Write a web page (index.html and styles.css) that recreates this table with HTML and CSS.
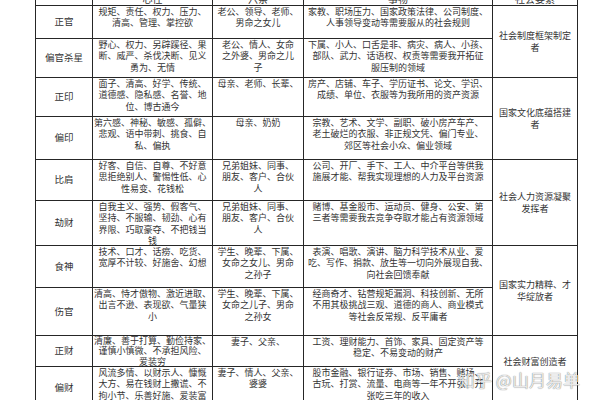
FILE: index.html
```html
<!DOCTYPE html>
<html lang="zh">
<head>
<meta charset="utf-8">
<link rel="stylesheet" href="styles.css">
</head>
<body>
<div class="page">
  <div class="grid">
    <div class="cell head"></div>
    <div class="cell head">心性</div>
    <div class="cell head">六亲</div>
    <div class="cell head">事物</div>
    <div class="cell head">社会要素</div>

    <div class="cell name">正官</div>
    <div class="cell txt">规矩、责任、权力、压力、<br>清高、管理、掌控欲</div>
    <div class="cell txt">老公、领导、老师、<br>男命之女儿</div>
    <div class="cell txt">家教、职场压力、国家政策法律、公司制度、<br>人事领导变动等需要服从的社会规则</div>
    <div class="cell soc">社会制度框架制定<br>者</div>

    <div class="cell name">偏官杀星</div>
    <div class="cell txt">野心、权力、另辟蹊径、果<br>断、威严、杀伐决断、见义<br>勇为、无情</div>
    <div class="cell txt">老公、情人、女命<br>之外婆、男命之儿<br>子</div>
    <div class="cell txt">下属、小人、口舌是非、病灾、病人、小孩、<br>部队、武力、话语权、权责等需要我开拓征<br>服压制的领域</div>

    <div class="cell name">正印</div>
    <div class="cell txt">面子、清高、好学、传统、<br>道德感、隐私感、名誉、地<br>位、博古通今</div>
    <div class="cell txt">母亲、老师、长辈、</div>
    <div class="cell txt">房产、店铺、车子、学历证书、论文、学识、<br>成绩、单位、衣服等为我所用的资产资源</div>
    <div class="cell soc">国家文化底蕴搭建<br>者</div>

    <div class="cell name">偏印</div>
    <div class="cell txt">第六感、神秘、敏感、孤僻、<br>悲观、语中带刺、挑食、自<br>私、偏执</div>
    <div class="cell txt">母亲、奶奶</div>
    <div class="cell txt">宗教、艺术、文学、副职、破小房产车产、<br>老土破烂的衣服、非正规文凭、偏门专业、<br>郊区等社会小众、偏业领域</div>

    <div class="cell name">比肩</div>
    <div class="cell txt">好客、自信、自尊、不好意<br>思拒绝别人、警惕性低、心<br>性易变、花钱松</div>
    <div class="cell txt">兄弟姐妹、同事、<br>朋友、客户、合伙<br>人</div>
    <div class="cell txt">公司、开厂、手下、工人、中介平台等供我<br>施展才能、帮我实现理想的人力及平台资源</div>
    <div class="cell soc">社会人力资源凝聚<br>发挥者</div>

    <div class="cell name">劫财</div>
    <div class="cell txt">自我主义、强势、假客气、<br>坚持、不服输、韧劲、心有<br>界限、巧取豪夺、不把钱当<br>钱</div>
    <div class="cell txt">兄弟姐妹、同事、<br>朋友、客户、合伙<br>人</div>
    <div class="cell txt">赌博、基金股市、运动员、健身、公安、第<br>三者等需要我去竞争夺取才能占有资源领域</div>

    <div class="cell name">食神</div>
    <div class="cell txt">技术、口才、话痨、吃货、<br>宽厚不计较、好施舍、幻想</div>
    <div class="cell txt">学生、晚辈、下属、<br>女命之女儿、男命<br>之孙子</div>
    <div class="cell txt">表演、唱歌、演讲、脑力科学技术从业、爱<br>吃、写作、捐款、放生等一切向外展现自我、<br>向社会回馈奉献</div>
    <div class="cell soc">国家实力精粹、才<br>华绽放者</div>

    <div class="cell name">伤官</div>
    <div class="cell txt">清高、恃才傲物、激近进取、<br>出言不逊、表现欲、气量狭<br>小</div>
    <div class="cell txt">学生、晚辈、下属、<br>女命之儿子、男命<br>之孙女</div>
    <div class="cell txt">经商奇才、钻营规矩漏洞、科技创新、无所<br>不用其极挑战三观、道德的商人、商业模式<br>等社会反常规、反平庸者</div>

    <div class="cell name">正财</div>
    <div class="cell txt tight">清廉、善于打算、勤俭持家、<br>谨慎小慎微、不承担风险、<br>爱装穷</div>
    <div class="cell txt">妻子、父亲、</div>
    <div class="cell txt">工资、理财能力、首饰、家具、固定资产等<br>稳定、不易变动的财产</div>
    <div class="cell soc upper">社会财富创造者</div>

    <div class="cell name">偏财</div>
    <div class="cell txt">风流多情、以财示人、慷慨<br>大方、易在钱财上撒谎、不<br>拘小节、乐善好施、爱装富</div>
    <div class="cell txt">妻子、情人、父亲、<br>婆婆</div>
    <div class="cell txt">股市金融、银行证券、市场、销售、赌场、<br>古玩、打赏、流量、电商等一年不开张，开<br>张吃三年的收入</div>
  </div>
  <div class="watermark">知乎 @山月易单</div>
</div>
</body>
</html>
```

FILE: styles.css
```css
html, body {
  margin: 0;
  padding: 0;
  background: #ffffff;
}

body {
  width: 600px;
  height: 400px;
  overflow: hidden;
}

.page {
  position: relative;
  width: 600px;
  height: 400px;
  overflow: hidden;
  font-family: "Noto Sans CJK SC", "Noto Sans", sans-serif;
  color: #333333;
}

.grid {
  display: grid;
  grid-template-columns: 56px 119px 90px 188px 84px;
  grid-template-rows: 14px 32px 38px 38px 42px 40px 44px 41px 47px 30px 41px;
  gap: 1px;
  padding: 1px;
  background: #262626;
  width: max-content;
  margin: -10px 0 0 35px;
}

.cell {
  background: #ffffff;
  font-size: 9px;
  line-height: 11.3px;
  text-align: center;
  white-space: nowrap;
}

.head {
  display: flex;
  align-items: center;
  justify-content: center;
  font-size: 10px;
  padding-top: 2px;
}

.name {
  display: flex;
  align-items: center;
  justify-content: center;
  font-size: 9.5px;
}

.txt {
  padding-top: 0;
}

.tight {
  line-height: 10.4px;
  padding-top: 0;
}

.soc {
  grid-row: span 2;
  display: flex;
  align-items: center;
  justify-content: center;
}

.upper {
  align-items: flex-start;
  padding-top: 20px;
}

.watermark {
  position: absolute;
  left: 458px;
  top: 370px;
  font-size: 17px;
  line-height: 20px;
  color: rgba(255, 255, 255, 0.85);
  text-shadow: 0 0 1px rgba(0, 0, 0, 0.45), 0 0 1px rgba(0, 0, 0, 0.3);
  white-space: nowrap;
}
```
